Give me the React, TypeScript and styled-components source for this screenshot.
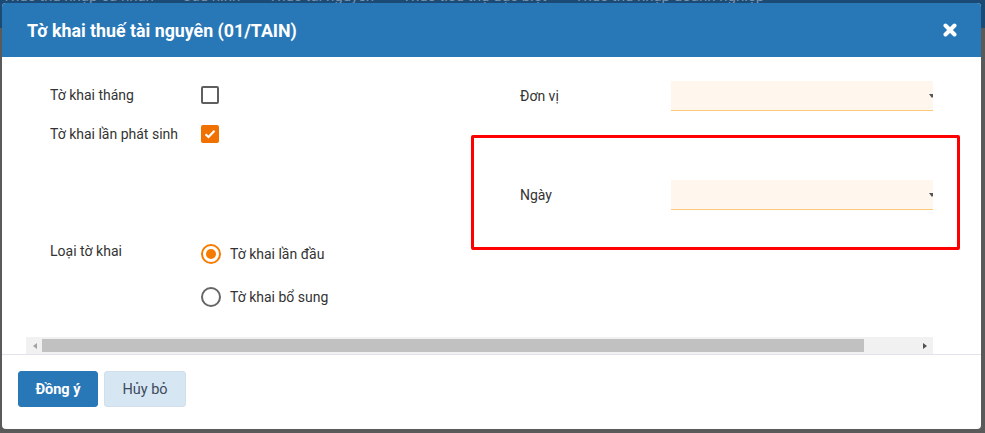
import React, { useState } from 'react';
import styled, { createGlobalStyle } from 'styled-components';

const GlobalStyle = createGlobalStyle`
  html, body {
    margin: 0;
    padding: 0;
    background: #5a5a5a;
    font-family: Roboto, "Liberation Sans", Arial, sans-serif;
  }
  * {
    box-sizing: border-box;
  }
`;

// trang phía sau lớp phủ (chỉ lộ ra một dải trên cùng)
const Screen = styled.div`
  position: relative;
  width: 985px;
  height: 433px;
  overflow: hidden;
  background: #5a5a5a;
`;

const NavBar = styled.div`
  height: 28px;
  background: #1b4a74;
  display: flex;
  gap: 28px;
  padding-left: 2px;
  color: rgba(200, 210, 225, 0.55);
  font-size: 15px;
  white-space: nowrap;
  span {
    margin-top: -13px;
    line-height: 18px;
  }
`;

const Modal = styled.div`
  position: absolute;
  left: 2px;
  top: 3px;
  width: 979px;
  height: 426px;
  background: #fff;
  border-radius: 4px;
  overflow: hidden;
  display: flex;
  flex-direction: column;
`;

const Header = styled.div`
  height: 54px;
  flex: none;
  background: #2878b8;
  display: flex;
  align-items: center;
  justify-content: space-between;
  padding: 0 24px 0 25px;
  h2 {
    margin: 0;
    color: #fff;
    font-size: 17.8px;
    font-weight: 700;
  }
`;

const CloseButton = styled.button`
  border: none;
  background: none;
  padding: 0;
  width: 14px;
  height: 14px;
  display: flex;
  cursor: pointer;
`;

const Body = styled.div`
  height: 298px;
  flex: none;
  padding: 0 48px 0 24px;
  border-bottom: 1px solid #e2e2ea;
`;

const ScrollArea = styled.div`
  width: 907px;
  overflow: hidden;
`;

const Content = styled.div`
  height: 280px;
  padding-top: 24px;
`;

const TopGrid = styled.div`
  display: grid;
  grid-template-columns: 470px 437px;
`;

const Column = styled.div<{ $gap: number }>`
  display: flex;
  flex-direction: column;
  gap: ${(p) => p.$gap}px;
  padding-left: 24px;
`;

const Row = styled.div<{ $h: number }>`
  height: ${(p) => p.$h}px;
  display: flex;
  align-items: center;
`;

const Label = styled.label`
  width: 151px;
  flex: none;
  font-size: 14px;
  color: #333;
`;

const CheckBox = styled.span<{ $checked: boolean }>`
  width: 18px;
  height: 18px;
  border-radius: 2px;
  display: flex;
  align-items: center;
  justify-content: center;
  cursor: pointer;
  border: ${(p) => (p.$checked ? 'none' : '2px solid #5f5f5f')};
  background: ${(p) => (p.$checked ? '#f07100' : '#fff')};
`;

const Select = styled.div`
  position: relative;
  width: 262px;
  height: 30px;
  background: #fff7ee;
  border-bottom: 1px solid #fcc87c;
  &::after {
    content: '';
    position: absolute;
    right: -2px;
    top: 13px;
    border-left: 3px solid transparent;
    border-right: 3px solid transparent;
    border-top: 4px solid #555;
  }
`;

const RadioSection = styled.div`
  display: flex;
  margin-top: 29px;
  padding-left: 24px;
  ${Label} {
    line-height: 24px;
  }
`;

const RadioList = styled.div`
  display: flex;
  flex-direction: column;
  gap: 13px;
`;

const RadioRow = styled.label`
  height: 30px;
  display: flex;
  align-items: center;
  gap: 9px;
  font-size: 14px;
  color: #333;
  cursor: pointer;
`;

const RadioCircle = styled.span<{ $on: boolean }>`
  width: 20px;
  height: 20px;
  border-radius: 50%;
  border: 2px solid ${(p) => (p.$on ? '#f57c00' : '#666')};
  display: flex;
  align-items: center;
  justify-content: center;
  &::after {
    content: '';
    width: 10px;
    height: 10px;
    border-radius: 50%;
    background: #f57c00;
    display: ${(p) => (p.$on ? 'block' : 'none')};
  }
`;

const ScrollBar = styled.div`
  height: 17px;
  background: #f1f1f1;
  display: flex;
  align-items: center;
`;

const ScrollArrow = styled.span<{ $dir: 'left' | 'right' }>`
  width: 16px;
  height: 17px;
  flex: none;
  display: flex;
  align-items: center;
  justify-content: center;
  &::before {
    content: '';
    border-top: 3.5px solid transparent;
    border-bottom: 3.5px solid transparent;
    ${(p) =>
      p.$dir === 'left'
        ? 'border-right: 4px solid #a3a3a3; margin-left: 1px;'
        : 'border-left: 4px solid #505050; margin-left: 0px;'}
  }
`;

const Thumb = styled.div`
  width: 822px;
  height: 13px;
  background: #c1c1c1;
`;

const Gap = styled.div`
  flex: 1;
`;

const Footer = styled.div`
  flex: 1;
  display: flex;
  gap: 6px;
  padding: 16px 16px 0;
`;

const Button = styled.button<{ $primary?: boolean }>`
  width: ${(p) => (p.$primary ? 80 : 82)}px;
  height: 36px;
  padding: 0;
  border-radius: 3px;
  font-family: Roboto, "Liberation Sans", Arial, sans-serif;
  font-size: 14.5px;
  font-weight: ${(p) => (p.$primary ? 700 : 400)};
  color: ${(p) => (p.$primary ? '#fff' : '#3d4b5c')};
  background: ${(p) => (p.$primary ? '#2878b8' : '#d7e6f3')};
  border: 1px solid ${(p) => (p.$primary ? '#2878b8' : '#d2dfeb')};
  cursor: pointer;
`;

// khung đỏ đánh dấu trên ảnh chụp
const Highlight = styled.div`
  position: absolute;
  left: 471px;
  top: 135px;
  width: 489px;
  height: 115px;
  border: 3px solid #ff0000;
  border-radius: 2px;
  pointer-events: none;
`;

const navItems = [
  'Thuế thu nhập cá nhân',
  'Cấu hình',
  'Thuế tài nguyên',
  'Thuế tiêu thụ đặc biệt',
  'Thuế thu nhập doanh nghiệp',
];

const App = () => {
  const [monthly, setMonthly] = useState(false);
  const [incurred, setIncurred] = useState(true);
  const [kind, setKind] = useState('first');

  return (
    <Screen>
      <GlobalStyle />
      <NavBar>
        {navItems.map((n) => (
          <span key={n}>{n}</span>
        ))}
      </NavBar>
      <Modal>
        <Header>
          <h2>Tờ khai thuế tài nguyên (01/TAIN)</h2>
          <CloseButton aria-label="close">
            <svg width="14" height="14" viewBox="0 0 14 14">
              <path
                d="M2.5 2.5 L11.5 11.5 M11.5 2.5 L2.5 11.5"
                stroke="#fff"
                strokeWidth="4"
                strokeLinecap="round"
              />
            </svg>
          </CloseButton>
        </Header>
        <Body>
          <ScrollArea>
            <Content>
              <TopGrid>
                <Column $gap={11}>
                  <Row $h={28}>
                    <Label>Tờ khai tháng</Label>
                    <CheckBox $checked={monthly} onClick={() => setMonthly(!monthly)} />
                  </Row>
                  <Row $h={28}>
                    <Label>Tờ khai lần phát sinh</Label>
                    <CheckBox $checked={incurred} onClick={() => setIncurred(!incurred)}>
                      {incurred && (
                        <svg width="12" height="10" viewBox="0 0 12 10">
                          <path
                            d="M1.5 5.2 L4.5 8 L10.5 1.8"
                            stroke="#fff"
                            strokeWidth="2.2"
                            fill="none"
                          />
                        </svg>
                      )}
                    </CheckBox>
                  </Row>
                </Column>
                <Column $gap={69}>
                  <Row $h={30}>
                    <Label>Đơn vị</Label>
                    <Select />
                  </Row>
                  <Row $h={30}>
                    <Label>Ngày</Label>
                    <Select />
                  </Row>
                </Column>
              </TopGrid>
              <RadioSection>
                <Label>Loại tờ khai</Label>
                <RadioList>
                  <RadioRow onClick={() => setKind('first')}>
                    <RadioCircle $on={kind === 'first'} />
                    Tờ khai lần đầu
                  </RadioRow>
                  <RadioRow onClick={() => setKind('extra')}>
                    <RadioCircle $on={kind === 'extra'} />
                    Tờ khai bổ sung
                  </RadioRow>
                </RadioList>
              </RadioSection>
            </Content>
            <ScrollBar>
              <ScrollArrow $dir="left" />
              <Thumb />
              <Gap />
              <ScrollArrow $dir="right" />
            </ScrollBar>
          </ScrollArea>
        </Body>
        <Footer>
          <Button $primary>Đồng ý</Button>
          <Button>Hủy bỏ</Button>
        </Footer>
      </Modal>
      <Highlight />
    </Screen>
  );
};

export default App;
